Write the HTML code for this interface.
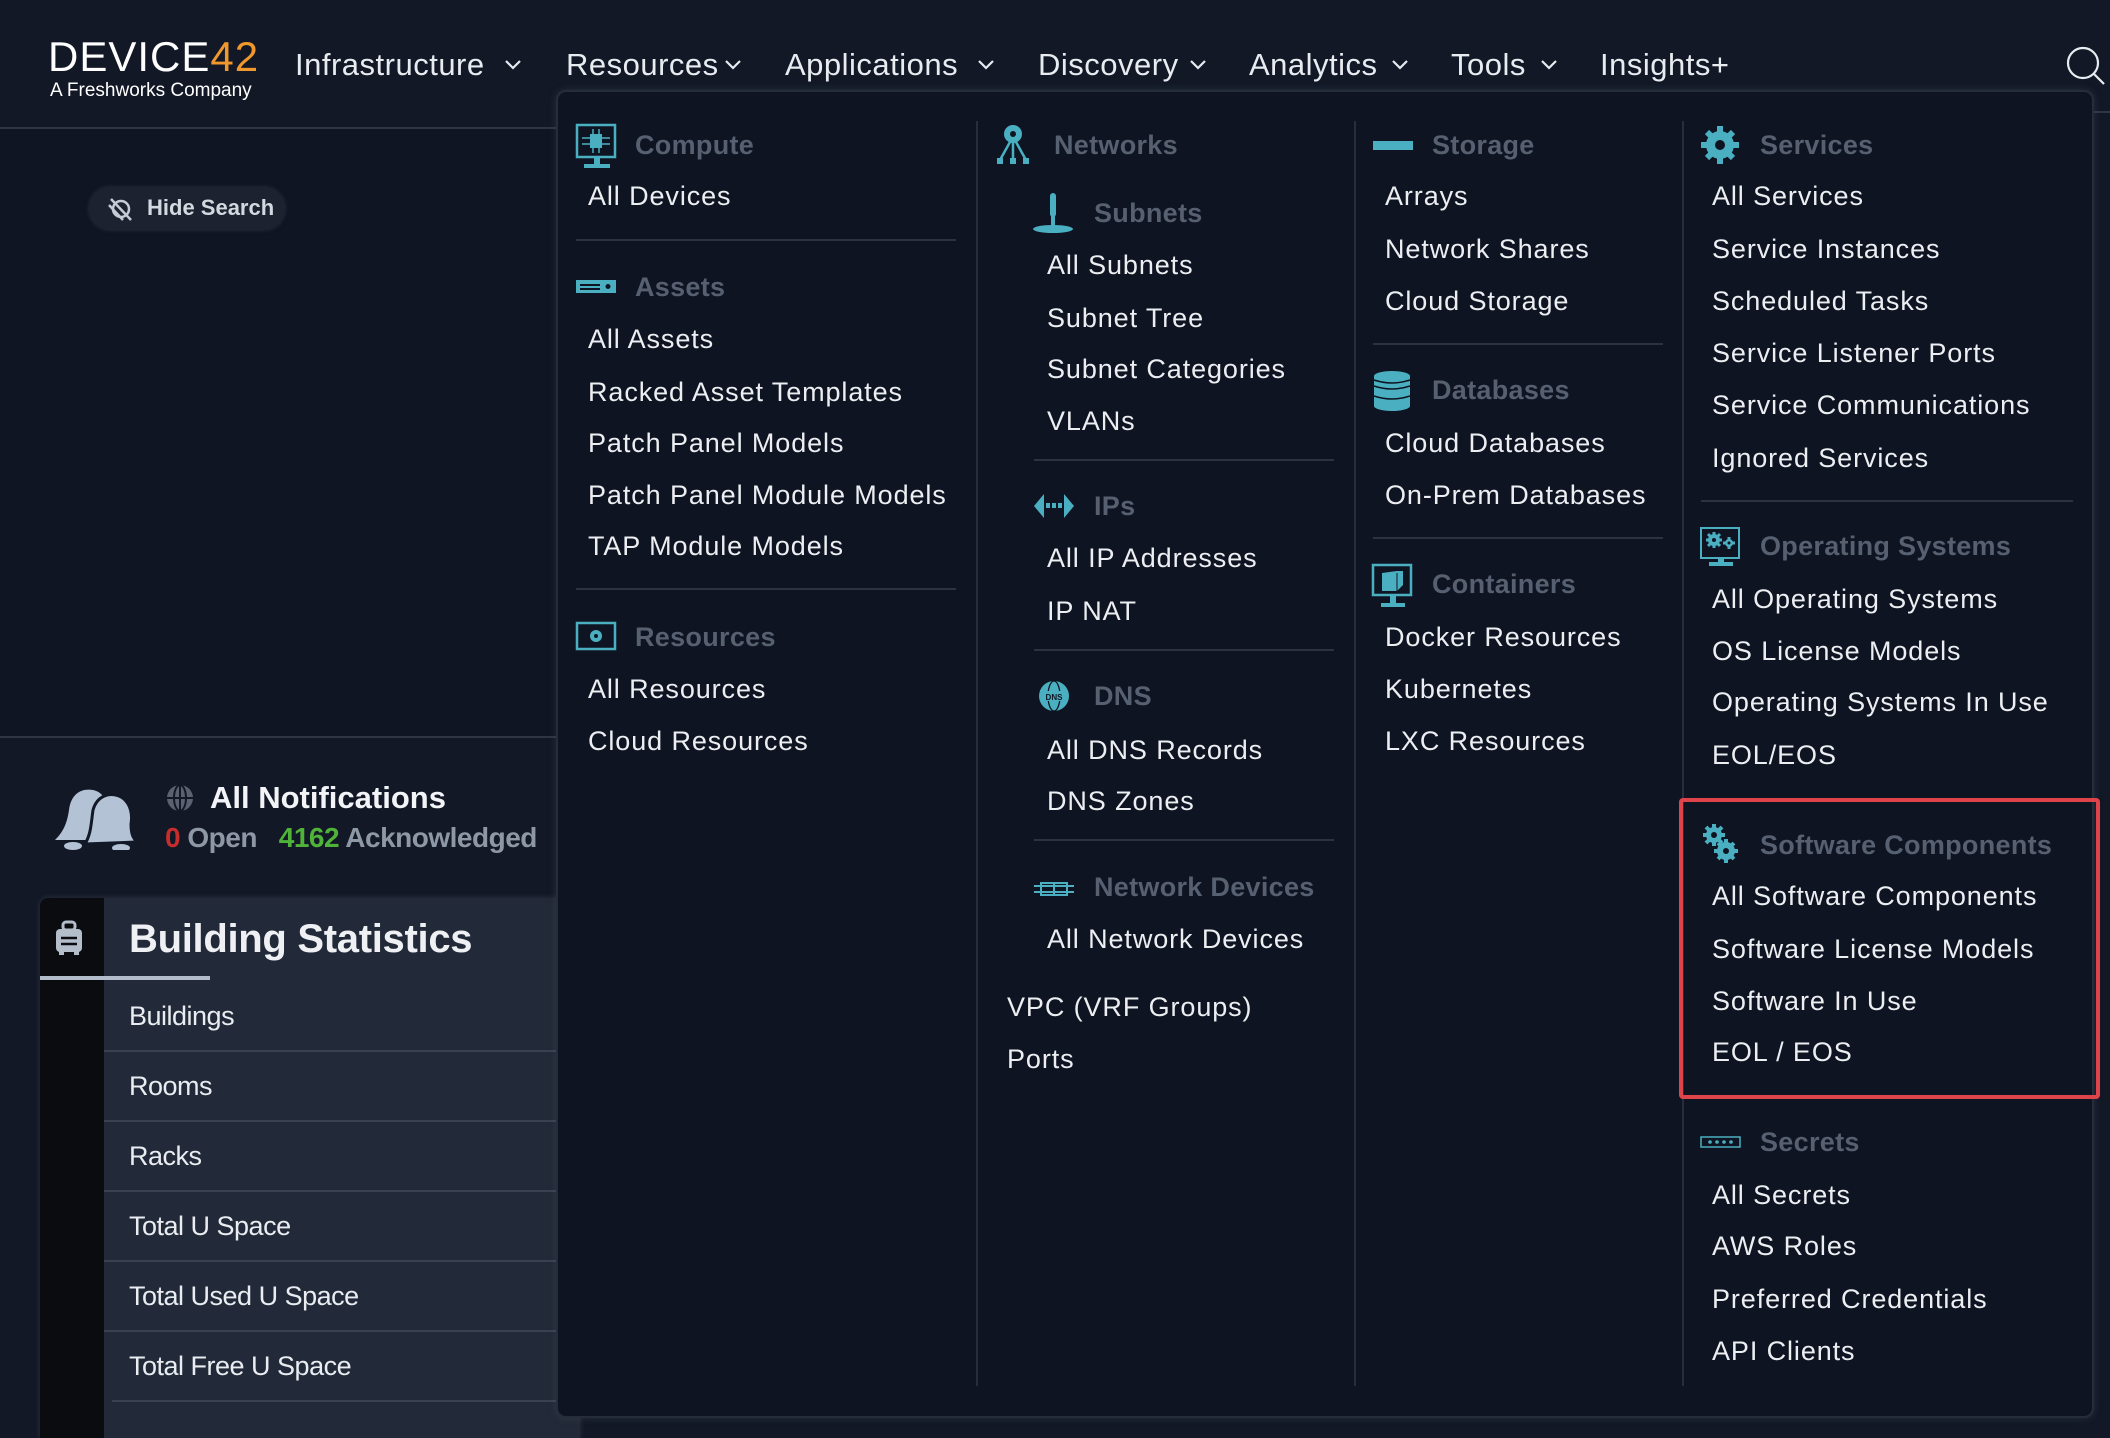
<!DOCTYPE html>
<html><head><meta charset="utf-8"><style>
*{margin:0;padding:0;box-sizing:border-box}
body{width:2110px;height:1432px;background:#121826;font-family:"Liberation Sans",sans-serif;position:relative;overflow:hidden}
.a{position:absolute;white-space:nowrap}
.nav{font-size:31px;color:#e8ecf1;top:46px;line-height:38px;letter-spacing:0.5px}
.i{font-size:27px;color:#eceef2;line-height:32px;letter-spacing:0.9px}
.h{font-size:27px;color:#566070;font-weight:bold;line-height:32px;letter-spacing:0.3px}
.sep{position:absolute;height:2px;background:#2b3241}
.vs{position:absolute;width:2px;background:#262d3b;top:121px;height:1265px}
.row{position:absolute;left:104px;width:452px;height:2px;background:#3a4252}
.rt{font-size:27px;color:#e9ecf0;left:129px;line-height:32px;letter-spacing:-0.5px}
</style></head><body>
<div class="a" style="left:0;top:0;width:2110px;height:128px;background:#121826"></div>
<div class="a" style="left:0;top:127px;width:556px;height:2px;background:#2e3544"></div>
<div class="a" style="left:0;top:129px;width:556px;height:608px;background:#0f1522"></div>
<div class="a" style="left:0;top:736px;width:556px;height:2px;background:#2e3544"></div>
<div class="a" style="left:48px;top:34px;font-size:42px;line-height:46px;color:#fff;letter-spacing:1px">DEVICE<span style="color:#f0982c">42</span></div>
<div class="a" style="left:50px;top:80px;font-size:19px;color:#fff">A Freshworks Company</div>
<div class="a nav" style="left:295px">Infrastructure</div>
<div class="a nav" style="left:566px">Resources</div>
<div class="a nav" style="left:785px">Applications</div>
<div class="a nav" style="left:1038px">Discovery</div>
<div class="a nav" style="left:1249px">Analytics</div>
<div class="a nav" style="left:1451px">Tools</div>
<div class="a nav" style="left:1600px">Insights+</div>
<svg class="a" style="left:0;top:0" width="2110" height="128">
<g fill="none" stroke="#e8ecf1" stroke-width="2.2">
<polyline points="506,61 513,68 520,61"/><polyline points="726,61 733,68 740,61"/><polyline points="979,61 986,68 993,61"/><polyline points="1191,61 1198,68 1205,61"/><polyline points="1393,61 1400,68 1407,61"/><polyline points="1542,61 1549,68 1556,61"/>
<circle cx="2083" cy="63" r="15"/><line x1="2094" y1="74" x2="2104" y2="84"/></g></svg>
<div class="a" style="left:89px;top:187px;width:196px;height:43px;border-radius:22px;background:#1c2230;box-shadow:0 0 4px #2a3140"></div>
<svg class="a" style="left:107px;top:196px" width="28" height="26"><g fill="none" stroke="#c5ccd6" stroke-width="2.5"><circle cx="14" cy="13" r="8"/><line x1="4" y1="3" x2="24" y2="24"/><line x1="2" y1="9" x2="16" y2="24"/></g></svg>
<div class="a" style="left:147px;top:194px;font-size:22px;font-weight:bold;color:#d4d9e0;line-height:28px">Hide Search</div>
<svg class="a" style="left:51px;top:780px" width="88" height="70"><g fill="#b4c2d6"><path d="M4,60 C12,52 16,44 18,30 C20,14 30,8 42,10 C52,12 58,22 56,34 L54,60 Z"/><path d="M34,64 C40,54 40,44 42,30 C46,16 58,12 68,16 C78,20 82,32 80,44 C80,54 82,58 86,62 Z" stroke="#121826" stroke-width="3"/><ellipse cx="22" cy="66" rx="9" ry="4"/><ellipse cx="70" cy="68" rx="9" ry="4"/></g></svg>
<svg class="a" style="left:165px;top:783px" width="30" height="30"><circle cx="15" cy="15" r="13" fill="#5a6272"/><g stroke="#121826" stroke-width="2" fill="none"><line x1="2" y1="15" x2="28" y2="15"/><line x1="15" y1="2" x2="15" y2="28"/><ellipse cx="15" cy="15" rx="6" ry="13"/></g></svg>
<div class="a" style="left:210px;top:780px;font-size:31px;font-weight:bold;color:#f2f4f7;line-height:36px">All Notifications</div>
<div class="a" style="left:165px;top:821px;font-size:28px;color:#8d97a6;font-weight:bold;line-height:34px;letter-spacing:-0.5px"><span style="color:#c62d2d">0</span> Open &nbsp;&nbsp;<span style="color:#4fb33a">4162</span> Acknowledged</div>
<div class="a" style="left:40px;top:898px;width:540px;height:540px;background:#222938;border-radius:8px 0 0 0;box-shadow:0 0 6px #2c3342"></div>
<div class="a" style="left:40px;top:898px;width:64px;height:540px;background:#0a0c10;border-radius:8px 0 0 0"></div>
<svg class="a" style="left:55px;top:920px" width="28" height="36"><g fill="#b4bdca"><rect x="8" y="2" width="12" height="8" rx="3" fill="none" stroke="#b4bdca" stroke-width="3"/><rect x="1" y="9" width="26" height="23" rx="4"/><rect x="4" y="31" width="5" height="4"/><rect x="19" y="31" width="5" height="4"/></g><g stroke="#0a0c10" stroke-width="2.5"><line x1="6" y1="18" x2="22" y2="18"/><line x1="6" y1="24" x2="22" y2="24"/></g></svg>
<div class="a" style="left:129px;top:915px;font-size:40px;font-weight:bold;color:#eef0f3;line-height:48px;letter-spacing:-0.3px">Building Statistics</div>
<div class="a" style="left:40px;top:976px;width:170px;height:4px;background:#b3bccb"></div>
<div class="a rt" style="top:1000px">Buildings</div>
<div class="row" style="top:1050px"></div>
<div class="a rt" style="top:1070px">Rooms</div>
<div class="row" style="top:1120px"></div>
<div class="a rt" style="top:1140px">Racks</div>
<div class="row" style="top:1190px"></div>
<div class="a rt" style="top:1210px">Total U Space</div>
<div class="row" style="top:1260px"></div>
<div class="a rt" style="top:1280px">Total Used U Space</div>
<div class="row" style="top:1330px"></div>
<div class="a rt" style="top:1350px">Total Free U Space</div>
<div class="row" style="top:1400px;left:112px"></div>
<div class="a" style="left:2094px;top:111px;width:16px;height:2px;background:#2e3544"></div>
<div class="a" style="left:556px;top:90px;width:1538px;height:1328px;background:#0e1421;border:2px solid #262d3a;border-radius:10px;box-shadow:0 0 8px rgba(80,90,110,.35)"></div>
<div class="vs" style="left:976px"></div>
<div class="vs" style="left:1354px"></div>
<div class="vs" style="left:1682px"></div>
<svg class="a" style="left:0;top:0" width="2110" height="1432">
<g fill="#4ab0c1" stroke="none">
<rect x="577" y="125" width="38" height="32" fill="none" stroke="#4ab0c1" stroke-width="2.5"/><rect x="584" y="164" width="26" height="4"/><rect x="594" y="157" width="6" height="8"/>
<rect x="590" y="134" width="12" height="14"/><g stroke="#4ab0c1" stroke-width="1.5"><line x1="582" y1="138" x2="610" y2="138"/><line x1="582" y1="144" x2="610" y2="144"/><line x1="593" y1="129" x2="593" y2="153"/><line x1="599" y1="129" x2="599" y2="153"/></g>
<rect x="576" y="280" width="40" height="13"/><g fill="#0e1421"><rect x="580" y="284" width="20" height="2"/><rect x="580" y="288" width="20" height="2"/><circle cx="608" cy="286.5" r="2.5"/></g>
<rect x="577" y="623" width="38" height="26" fill="none" stroke="#4ab0c1" stroke-width="2.5"/><circle cx="596" cy="636" r="6"/><circle cx="596" cy="636" r="2" fill="#0e1421"/>
<circle cx="1013" cy="134" r="9"/><circle cx="1013" cy="134" r="3" fill="#0e1421"/><path d="M1010,142 L1000,160 M1013,142 L1013,160 M1016,142 L1026,160" stroke="#4ab0c1" stroke-width="2.5"/><rect x="997" y="158" width="6" height="6"/><rect x="1010" y="158" width="6" height="6"/><rect x="1023" y="158" width="6" height="6"/>
<rect x="1050" y="193" width="6" height="24" rx="3"/><ellipse cx="1053" cy="229" rx="20" ry="4"/><rect x="1051" y="215" width="4" height="12"/>
<path d="M1034,506 L1044,494 L1044,518 Z"/><path d="M1074,506 L1064,494 L1064,518 Z"/><rect x="1046" y="503" width="4" height="5"/><rect x="1052" y="503" width="4" height="5"/><rect x="1058" y="503" width="4" height="5"/>
<circle cx="1054" cy="696" r="15"/><g fill="none" stroke="#0e1421" stroke-width="1.3"><ellipse cx="1054" cy="696" rx="6" ry="15"/></g><rect x="1041" y="691" width="26" height="10" fill="#4ab0c1"/><text x="1054" y="700" font-size="8" font-weight="bold" fill="#0e1421" text-anchor="middle" font-family="Liberation Sans">DNS</text>
<rect x="1034" y="885" width="40" height="2"/><rect x="1034" y="891" width="40" height="2"/><rect x="1041" y="883" width="26" height="12" fill="none" stroke="#4ab0c1" stroke-width="2"/><rect x="1053" y="883" width="2" height="12"/>
<rect x="1373" y="141" width="40" height="9"/>
<ellipse cx="1392" cy="376" rx="18" ry="5"/><rect x="1374" y="376" width="36" height="30"/><ellipse cx="1392" cy="406" rx="18" ry="5"/><g fill="none" stroke="#0e1421" stroke-width="1.5"><path d="M1374,386 Q1392,392 1410,386"/><path d="M1374,396 Q1392,402 1410,396"/><path d="M1374,380 Q1392,386 1410,380"/></g>
<rect x="1373" y="565" width="38" height="30" fill="none" stroke="#4ab0c1" stroke-width="2.5"/><rect x="1381" y="603" width="24" height="4"/><rect x="1390" y="595" width="6" height="8"/><path d="M1382,573 L1397,571 L1403,571 L1403,585 L1397,591 L1382,591 Z"/><path d="M1397,573 L1397,591" stroke="#0e1421" stroke-width="1"/>
<circle cx="1720" cy="145" r="14"/><g stroke="#4ab0c1" stroke-width="6"><line x1="1720" y1="126" x2="1720" y2="164"/><line x1="1701" y1="145" x2="1739" y2="145"/><line x1="1707" y1="132" x2="1733" y2="158"/><line x1="1733" y1="132" x2="1707" y2="158"/></g><circle cx="1720" cy="145" r="5" fill="#0e1421"/>
<rect x="1701" y="528" width="38" height="30" fill="none" stroke="#4ab0c1" stroke-width="2"/><rect x="1709" y="562" width="24" height="4"/><rect x="1718" y="558" width="6" height="5"/>
<g stroke="#4ab0c1" stroke-width="3"><line x1="1714" y1="532" x2="1714" y2="548"/><line x1="1706" y1="540" x2="1722" y2="540"/><line x1="1708" y1="534" x2="1720" y2="546"/><line x1="1720" y1="534" x2="1708" y2="546"/><line x1="1729" y1="537" x2="1729" y2="549"/><line x1="1723" y1="543" x2="1735" y2="543"/></g>
<circle cx="1714" cy="540" r="6"/><circle cx="1729" cy="543" r="4"/><circle cx="1714" cy="540" r="2" fill="#0e1421"/><circle cx="1729" cy="543" r="1.5" fill="#0e1421"/>
<g stroke="#4ab0c1" stroke-width="4"><line x1="1714" y1="824" x2="1714" y2="846"/><line x1="1703" y1="835" x2="1725" y2="835"/><line x1="1706" y1="827" x2="1722" y2="843"/><line x1="1722" y1="827" x2="1706" y2="843"/><line x1="1726" y1="839" x2="1726" y2="863"/><line x1="1714" y1="851" x2="1738" y2="851"/><line x1="1718" y1="843" x2="1734" y2="859"/><line x1="1734" y1="843" x2="1718" y2="859"/></g>
<circle cx="1714" cy="835" r="8"/><circle cx="1726" cy="851" r="9"/><circle cx="1714" cy="835" r="3" fill="#0e1421"/><circle cx="1726" cy="851" r="3" fill="#0e1421"/>
<rect x="1701" y="1137" width="39" height="10" fill="none" stroke="#4ab0c1" stroke-width="1.5"/><circle cx="1710" cy="1142" r="1.8"/><circle cx="1717" cy="1142" r="1.8"/><circle cx="1724" cy="1142" r="1.8"/><circle cx="1731" cy="1142" r="1.8"/>
</g>
<rect x="1681" y="800" width="417" height="297" fill="none" stroke="#e0444b" stroke-width="4" rx="2"/>
</svg>
<div class="a h" style="left:635px;top:129px">Compute</div>
<div class="a i" style="left:588px;top:180px">All Devices</div>
<div class="sep" style="left:576px;top:239px;width:380px"></div>
<div class="a h" style="left:635px;top:271px">Assets</div>
<div class="a i" style="left:588px;top:323px">All Assets</div>
<div class="a i" style="left:588px;top:376px">Racked Asset Templates</div>
<div class="a i" style="left:588px;top:427px">Patch Panel Models</div>
<div class="a i" style="left:588px;top:479px">Patch Panel Module Models</div>
<div class="a i" style="left:588px;top:530px">TAP Module Models</div>
<div class="sep" style="left:576px;top:588px;width:380px"></div>
<div class="a h" style="left:635px;top:621px">Resources</div>
<div class="a i" style="left:588px;top:673px">All Resources</div>
<div class="a i" style="left:588px;top:725px">Cloud Resources</div>
<div class="a h" style="left:1054px;top:129px">Networks</div>
<div class="a h" style="left:1094px;top:197px">Subnets</div>
<div class="a i" style="left:1047px;top:249px">All Subnets</div>
<div class="a i" style="left:1047px;top:302px">Subnet Tree</div>
<div class="a i" style="left:1047px;top:353px">Subnet Categories</div>
<div class="a i" style="left:1047px;top:405px">VLANs</div>
<div class="sep" style="left:1034px;top:459px;width:300px"></div>
<div class="a h" style="left:1094px;top:490px">IPs</div>
<div class="a i" style="left:1047px;top:542px">All IP Addresses</div>
<div class="a i" style="left:1047px;top:595px">IP NAT</div>
<div class="sep" style="left:1034px;top:649px;width:300px"></div>
<div class="a h" style="left:1094px;top:680px">DNS</div>
<div class="a i" style="left:1047px;top:734px">All DNS Records</div>
<div class="a i" style="left:1047px;top:785px">DNS Zones</div>
<div class="sep" style="left:1034px;top:839px;width:300px"></div>
<div class="a h" style="left:1094px;top:871px">Network Devices</div>
<div class="a i" style="left:1047px;top:923px">All Network Devices</div>
<div class="a i" style="left:1007px;top:991px">VPC (VRF Groups)</div>
<div class="a i" style="left:1007px;top:1043px">Ports</div>
<div class="a h" style="left:1432px;top:129px">Storage</div>
<div class="a i" style="left:1385px;top:180px">Arrays</div>
<div class="a i" style="left:1385px;top:233px">Network Shares</div>
<div class="a i" style="left:1385px;top:285px">Cloud Storage</div>
<div class="sep" style="left:1373px;top:343px;width:290px"></div>
<div class="a h" style="left:1432px;top:374px">Databases</div>
<div class="a i" style="left:1385px;top:427px">Cloud Databases</div>
<div class="a i" style="left:1385px;top:479px">On-Prem Databases</div>
<div class="sep" style="left:1373px;top:537px;width:290px"></div>
<div class="a h" style="left:1432px;top:568px">Containers</div>
<div class="a i" style="left:1385px;top:621px">Docker Resources</div>
<div class="a i" style="left:1385px;top:673px">Kubernetes</div>
<div class="a i" style="left:1385px;top:725px">LXC Resources</div>
<div class="a h" style="left:1760px;top:129px">Services</div>
<div class="a i" style="left:1712px;top:180px">All Services</div>
<div class="a i" style="left:1712px;top:233px">Service Instances</div>
<div class="a i" style="left:1712px;top:285px">Scheduled Tasks</div>
<div class="a i" style="left:1712px;top:337px">Service Listener Ports</div>
<div class="a i" style="left:1712px;top:389px">Service Communications</div>
<div class="a i" style="left:1712px;top:442px">Ignored Services</div>
<div class="sep" style="left:1701px;top:500px;width:372px"></div>
<div class="a h" style="left:1760px;top:530px">Operating Systems</div>
<div class="a i" style="left:1712px;top:583px">All Operating Systems</div>
<div class="a i" style="left:1712px;top:635px">OS License Models</div>
<div class="a i" style="left:1712px;top:686px">Operating Systems In Use</div>
<div class="a i" style="left:1712px;top:739px">EOL/EOS</div>
<div class="a h" style="left:1760px;top:829px">Software Components</div>
<div class="a i" style="left:1712px;top:880px">All Software Components</div>
<div class="a i" style="left:1712px;top:933px">Software License Models</div>
<div class="a i" style="left:1712px;top:985px">Software In Use</div>
<div class="a i" style="left:1712px;top:1036px">EOL / EOS</div>
<div class="a h" style="left:1760px;top:1126px">Secrets</div>
<div class="a i" style="left:1712px;top:1179px">All Secrets</div>
<div class="a i" style="left:1712px;top:1230px">AWS Roles</div>
<div class="a i" style="left:1712px;top:1283px">Preferred Credentials</div>
<div class="a i" style="left:1712px;top:1335px">API Clients</div>
</body></html>
